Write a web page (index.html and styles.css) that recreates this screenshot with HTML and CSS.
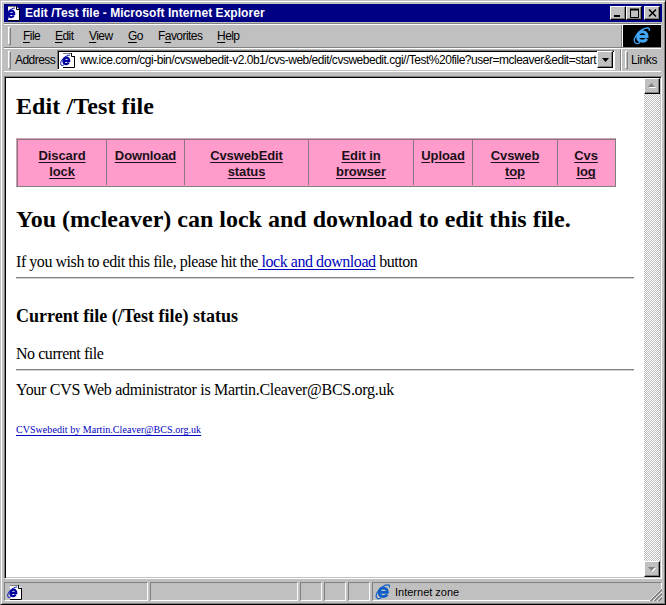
FILE: index.html
```html
<!DOCTYPE html>
<html lang="en">
<head>
<meta charset="utf-8">
<title>Edit /Test file</title>
<link rel="stylesheet" href="styles.css">
</head>
<body>
<svg width="0" height="0" class="defs">
  <symbol id="doc" viewBox="0 0 16 16">
    <path d="M3 1h8l4 4v11H3z" fill="#fff"/>
    <path d="M3 1.500h8" stroke="#808080"/>
    <path d="M11.500 1v3.500H15M14.500 4v11.500H3" fill="none" stroke="#000"/>
    <path d="M3.500 8.800h5.700c.2-4.200-5.300-4.100-5.700 0c-.2 4.200 4.300 4 5.300 1.600" fill="none" stroke="#00009c" stroke-width="2.200"/>
    <path d="M1 13C-1 9 6 3 10 3M1 13c1 1 2 .5 3-.5" fill="none" stroke="#0010b0"/>
  </symbol>
  <symbol id="globe" viewBox="0 0 18 18">
    <path d="M5 9.500h9C14 3.200 5.300 3 4.700 9.200c-.2 6 7 6.200 9 2.600" fill="none" stroke="currentColor" stroke-width="3"/>
    <path d="M2.500 16C-2 12 8 1 14.500 1c2 0 2.200 1.500 1.500 3M2.500 16c1.300 1 3 .5 4.500-.5" fill="none" stroke="currentColor" stroke-width="1.300"/>
  </symbol>
</svg>
<div class="window">
  <header class="title">
    <svg class="i16"><use href="#doc"/></svg>
    <span class="title-text">Edit /Test file - Microsoft Internet Explorer</span>
    <span class="btn"><svg width="12" height="10"><path d="M2 8h6" stroke="#000" stroke-width="2"/></svg></span>
    <span class="btn"><svg width="12" height="10"><path d="M2 1.500h9" stroke="#000" stroke-width="2"/><path d="M2.500 1v8.500h8V1" fill="none" stroke="#000"/></svg></span>
    <span class="btn close"><svg width="12" height="10"><path d="M3 1.500l7 7M10 1.500l-7 7" stroke="#000" stroke-width="1.600"/></svg></span>
  </header>
  <nav class="bar menu">
    <i class="grip"></i>
    <span class="m1"><u>F</u>ile</span><span class="m2"><u>E</u>dit</span><span class="m3"><u>V</u>iew</span><span class="m4"><u>G</u>o</span><span class="m5">F<u>a</u>vorites</span><span class="m6"><u>H</u>elp</span>
    <div class="brand"><svg width="18" height="18"><use href="#globe"/></svg></div>
  </nav>
  <div class="bar address">
    <i class="grip"></i>
    <span class="label">Address</span>
    <div class="field">
      <svg class="i16"><use href="#doc"/></svg>
      <span class="url">ww.ice.com/cgi-bin/cvswebedit-v2.0b1/cvs-web/edit/cvswebedit.cgi//Test%20file?user=mcleaver&amp;edit=start</span>
      <span class="drop"><svg width="7" height="4"><path d="M0 0h7L3.500 4z"/></svg></span>
    </div>
    <div class="links"><i class="grip"></i><span>Links</span></div>
  </div>
  <div class="view">
    <main>
      <h2 class="t1"><span>Edit /Test file</span></h2>
      <div class="tabs">
        <a><span>Discard<br>lock</span></a><a><span>Download</span></a><a><span>CvswebEdit<br>status</span></a><a><span>Edit in<br>browser</span></a><a><span>Upload</span></a><a><span>Cvsweb<br>top</span></a><a><span>Cvs<br>log</span></a>
      </div>
      <h2 class="t2">You (mcleaver) can lock and download to edit this file.</h2>
      <p class="p1">If you wish to edit this file, please hit the<a class="link"> lock and download</a> button</p>
      <hr>
      <h3>Current file (/Test file) status</h3>
      <p class="p2">No current file</p>
      <hr>
      <p class="p3">Your CVS Web administrator is Martin.Cleaver@BCS.org.uk</p>
      <p class="p4"><a class="link">CVSwebedit by Martin.Cleaver@BCS.org.uk</a></p>
    </main>
    <div class="scroll">
      <span class="arrow"><svg width="8" height="5"><path d="M1 5h7L4.500 1z" fill="#fff"/><path d="M0 4h7L3.500 0z" fill="#808080"/></svg></span>
      <span class="arrow"><svg width="8" height="5"><path d="M1 1h7L4.500 5z" fill="#fff"/><path d="M0 0h7L3.500 4z" fill="#808080"/></svg></span>
    </div>
  </div>
  <footer class="status">
    <div><svg class="i16"><use href="#doc"/></svg></div><div></div><div></div><div></div><div></div>
    <div class="zone"><svg class="i16 blue"><use href="#globe"/></svg><span>Internet zone</span></div>
    <svg class="resize" width="13" height="13"><path d="M0 13L13 0M4 13l9-9M8 13l5-5" stroke="#fff"/><path d="M1.500 13L13 1.500M5.500 13L13 5.500M9.500 13L13 9.500" stroke="#808080" stroke-width="1.700"/></svg>
  </footer>
</div>
</body>
</html>
```
FILE: styles.css
```css
* { box-sizing: border-box; }
body { margin: 0; overflow: hidden; font: 11px/14px "Liberation Sans", Arial, sans-serif; color: #000; }
.defs { position: absolute; }
svg { display: block; flex: none; }
.window {
  width: 666px; height: 605px; padding: 3px; background: #c0c0c0;
  border: 1px solid; border-color: #c0c0c0 #000 #000 #c0c0c0;
  box-shadow: inset 1px 1px #fff, inset -1px -1px #808080;
  display: flex; flex-direction: column;
}
.i16 { width: 16px; height: 16px; }
.title { height: 18px; background: #000084; color: #fff; font-weight: bold; display: flex; align-items: center; padding: 0 2px 0 1px; }
.title-text { flex: 1; margin-left: 4px; white-space: nowrap; font-size: 12px; letter-spacing: .04px; }
.btn, .drop, .arrow { background: #c0c0c0; border: 1px solid; border-color: #fff #000 #000 #fff; box-shadow: inset -1px -1px #808080; flex: none; }
.btn { width: 16px; height: 14px; padding: 1px; }
.close { margin-left: 2px; }
.bar { display: flex; align-items: center; height: 24px; margin-right: 1px; border-top: 1px solid #808080; box-shadow: inset 0 1px #fff; padding: 1px 0 0 4px; white-space: nowrap; font-size: 12px; letter-spacing: -.55px; }
.menu { margin-top: 1px; }
.grip { width: 3px; height: 18px; border: 1px solid; border-color: #fff #808080 #808080 #fff; flex: none; }
.menu span { flex: none; }
u { text-underline-offset: 2px; }
.m1 { width: 32px; margin-left: 12px; }
.m2 { width: 34px; }
.m3 { width: 39px; }
.m4 { width: 30px; }
.m5 { width: 59px; }
.brand { width: 38px; height: 22px; margin-left: auto; background: #000; color: #42a5f7; display: grid; place-items: center; box-shadow: -1px 0 #fff, -2px 0 #808080; }
.address { height: 25px; border-bottom: 1px solid #fff; }
.label { margin-left: 4px; width: 42px; flex: none; }
.field { width: 558px; flex: none; height: 20px; display: flex; align-items: center; background: #fff; border: 1px solid; border-color: #808080 #fff #fff #808080; box-shadow: inset 1px 1px #000; padding: 1px 1px 1px 2px; }
.url { flex: 1; margin-left: 4px; letter-spacing: -.485px; }
.drop { width: 16px; height: 17px; display: grid; place-items: center; }
.links { display: flex; align-items: center; margin-left: 5px; height: 22px; border-left: 1px solid #808080; box-shadow: inset 1px 0 #fff; padding-left: 4px; }
.links span { margin-left: 3px; letter-spacing: -.4px; }
.view { height: 504px; margin-top: 4px; display: flex; background: #fff; border: 1px solid; border-color: #808080 #fff #fff #808080; box-shadow: inset 1px 1px #000, inset -1px -1px #c0c0c0; padding: 1px 1px 1px 1px; }
main { flex: 1; padding: 0 10px; font: 16px/20px "Liberation Serif", "Times New Roman", serif; white-space: nowrap; }
h2, h3, p { margin: 0; }
h2 { font-size: 24px; line-height: 28px; }
.t1 { padding-top: 14px; height: 60px; letter-spacing: .1px; }
.tabs { width: 600px; height: 49px; display: grid; grid-template-columns: 88px 78px 124px 105px 59px 85px 57px; background: #ff9ccc; border: 1px solid; border-color: #d0a5b8 #808080 #808080 #c7a0b0; box-shadow: inset 1px 1px #8d7580; padding: 1px; color: #1c1018; font: bold 13px/16px "Liberation Sans", Arial, sans-serif; letter-spacing: -.1px; text-align: center; text-underline-offset: 2px; }
.tabs a { padding-top: 8px; text-decoration: underline; }
.tabs a + a { border-left: 1px solid #8d7580; }
.t2 { margin-top: 18px; }
.p1 { margin-top: 19px; letter-spacing: -.45px; }
.link { color: #0000c0; text-decoration: underline; text-underline-offset: 2px; }
hr { margin: 5px 0 0; border: 0; height: 2px; background: linear-gradient(#808080 50%, #d4d4d4 50%); }
h3 { font-size: 18px; line-height: 22px; margin-top: 26px; }
.p2 { margin-top: 17px; letter-spacing: -.45px; }
.p3 { margin-top: 9px; letter-spacing: -.3px; }
.p4 { font-size: 10px; line-height: 12px; margin-top: 24px; letter-spacing: .05px; }
.scroll { width: 16px; display: flex; flex-direction: column; justify-content: space-between; background: repeating-conic-gradient(#c0c0c0 0 25%, #fff 0 50%) 0 0 / 2px 2px; }
.arrow { width: 16px; height: 16px; display: grid; place-items: center; }
.status { height: 19px; margin-top: 3px; display: grid; grid-template-columns: 144px 148px 22px 22px 22px 1fr; gap: 2px; position: relative; }
.status div { border: 1px solid; border-color: #808080 #fff #fff #808080; padding-left: 2px; display: flex; align-items: center; }
.zone span { margin-left: 4px; }
.blue { color: #1060c8; }
.resize { position: absolute; right: 0; bottom: 0; background: #c0c0c0; }
```
